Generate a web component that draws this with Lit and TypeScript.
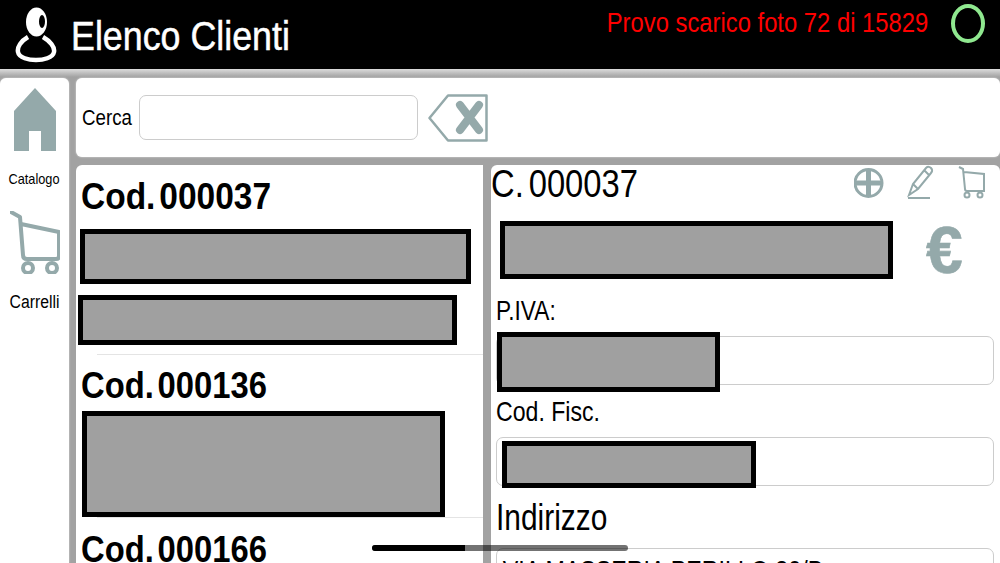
import { LitElement, html, css } from "lit";
import { customElement } from "lit/decorators.js";

const C = "#94a9aa";

@customElement("app-root")
export class AppRoot extends LitElement {
  static styles = css`
    :host { display: block; position: relative; width: 1000px; height: 563px; overflow: hidden; background: #a2a2a2; font-family: "Liberation Sans", Arial, sans-serif; color: #000; }
    .sq { transform-origin: left center; white-space: nowrap; }
    .header { height: 69px; background: #000; display: flex; align-items: flex-start; color: #fff; position: relative; z-index: 1; }
    .user { width: 42px; height: 56px; margin: 7px 0 0 15px; flex: none; }
    .title { font-size: 40px; line-height: 72px; margin-left: 14px; flex: 1; transform: scaleX(.895); -webkit-text-stroke: .5px #fff; }
    .status { color: #f00; font-size: 28px; line-height: 46px; white-space: nowrap; margin-right: 23px; transform: scaleX(.85); transform-origin: right center; }
    .ring { width: 26px; height: 31px; margin: 4px 15px 0 0; border: 4px solid #8fe88f; border-radius: 50%; flex: none; }
    .body { display: flex; height: 494px; background: linear-gradient(#dcdcdc 0, #a2a2a2 8px); }
    .side { width: 69px; margin-top: 9px; background: #fff; border-radius: 6px 6px 0 0; display: flex; flex-direction: column; align-items: center; flex: none; font-size: 15px; box-shadow: 0 0 2px rgba(255,255,255,.7); }
    .home { width: 42px; height: 63px; margin-top: 10px; }
    .cat { margin-top: 19px; line-height: 17px; transform: scaleX(.85); white-space: nowrap; }
    .cart { width: 50px; height: 63px; margin-top: 24px; }
    .car { font-size: 18px; line-height: 20px; margin-top: 18px; transform: scaleX(.875); white-space: nowrap; }
    .main { margin-left: 7px; flex: 1; min-width: 0; margin-top: 9px; display: flex; flex-direction: column; gap: 8px; }
    .search { height: 79px; background: #fff; border-radius: 6px; display: flex; align-items: center; flex: none; box-sizing: border-box; padding-left: 6px; box-shadow: 0 0 2px rgba(255,255,255,.7); }
    .search label { font-size: 22px; width: 57px; flex: none; transform: scaleX(.85); }
    .box { border: 1px solid #ccc; border-radius: 7px; background: #fff; box-sizing: border-box; }
    .search .box { width: 279px; height: 45px; }
    .clear { width: 60px; height: 48px; margin-left: 10px; }
    .panes { display: flex; gap: 8px; flex: 1; min-height: 0; }
    .list { width: 407px; background: #fff; flex: none; overflow: hidden; border-radius: 6px 0 0 0; }
    .code { font-size: 37px; font-weight: 700; line-height: 42px; margin-left: 5px; word-spacing: -6px; transform: scaleX(.905); }
    .code.k { transform: scaleX(.886); }
    .redact { background: #a0a0a0; border: 5px solid #000; box-sizing: border-box; flex: none; }
    .rule { height: 1px; background: #e4e4e4; margin-left: 21px; }
    .detail { flex: 1; background: #fff; border-radius: 6px 6px 0 0; overflow: hidden; padding-left: 5px; }
    .dtop { display: flex; align-items: flex-start; height: 56px; }
    .dcode { font-size: 39px; line-height: 38px; flex: 1; margin-left: -5px; word-spacing: -5px; transform: scaleX(.84); }
    .tool { flex: none; margin-right: 15px; }
    .drow { display: flex; align-items: center; }
    .euro { color: #94a9aa; font-size: 66px; font-weight: 700; line-height: 58px; margin-left: 33px; -webkit-text-stroke: .6px #94a9aa; }
    .lab { font-size: 28px; line-height: 32px; transform: scaleX(.825); }
    .lab.p { transform: scaleX(.81); }
    .field { width: 498px; height: 49px; display: flex; }
    .addr { font-size: 36px; line-height: 40px; transform: scaleX(.83); }
    .val { font-size: 28px; line-height: 30px; padding: 7px 0 0 7px; transform: scaleX(.83); }
    .bar { position: absolute; left: 372px; top: 545px; width: 256px; height: 6px; border-radius: 3px; background: rgba(0,0,0,.55); overflow: hidden; }
    .bar div { width: 93px; height: 6px; background: #000; }
    .mt1 { margin-top: 11px; } .mt2 { margin-top: 10px; } .mt3 { margin-top: 9px; } .mt4 { margin-top: 16px; } .mt5 { margin-top: 12px; }
    .r1 { width: 391px; height: 55px; margin: 11px 0 0 4px; }
    .r2 { width: 379px; height: 50px; margin: 11px 0 0 2px; }
    .r3 { width: 363px; height: 106px; margin: 4px 0 0 6px; }
    .r4 { width: 393px; height: 58px; margin-left: 4px; }
    .r5 { width: 223px; height: 60px; margin-top: -5px; }
    .r6 { width: 254px; height: 47px; margin: 3px 0 0 5px; }
  `;

  render() {
    return html`
      <div class="header">
        <svg class="user" viewBox="0 0 42 56" fill="none"><ellipse cx="21.5" cy="15" rx="10.5" ry="14.5" fill="#fff"/><ellipse cx="27" cy="14.5" rx="3" ry="6.5" fill="#000"/><path d="M13 30C6 34 2 40 3 45 4 51 14 53 21 53 28 53 38 51 39 45 40 40 35 34 28 30" stroke="#fff" stroke-width="4.5"/></svg>
        <div class="title sq">Elenco Clienti</div>
        <div class="status">Provo scarico foto 72 di 15829</div>
        <div class="ring"></div>
      </div>
      <div class="body">
        <div class="side">
          <svg class="home" viewBox="0 0 42 63"><path d="M21 0 42 23V63H27V43H15V63H0V23z" fill="${C}"/></svg>
          <div class="cat">Catalogo</div>
          <svg class="cart" viewBox="0 0 50 63" fill="none" stroke="${C}" stroke-width="4" stroke-linecap="round" stroke-linejoin="round"><path d="M1 1 10 6l3 38c0 3 2 4 4 4h29c2 0 3-1 3-3V21L11 13"/><circle cx="18" cy="57" r="5"/><circle cx="42" cy="57" r="5"/></svg>
          <div class="car">Carrelli</div>
        </div>
        <div class="main">
          <div class="search">
            <label class="sq">Cerca</label>
            <div class="box"></div>
            <svg class="clear" viewBox="0 0 60 48"><path d="M1.5 24 20 1.5H58.5V46.5H20z" fill="none" stroke="${C}" stroke-width="2.5" stroke-linejoin="round"/><path d="M32 11 51 36M51 11 32 36" stroke="${C}" stroke-width="8" stroke-linecap="round"/></svg>
          </div>
          <div class="panes">
            <div class="list">
              <div class="code sq mt1">Cod. 000037</div>
              <div class="redact r1"></div>
              <div class="redact r2"></div>
              <div class="rule mt3"></div>
              <div class="code k sq mt2">Cod. 000136</div>
              <div class="redact r3"></div>
              <div class="rule"></div>
              <div class="code k sq mt1">Cod. 000166</div>
            </div>
            <div class="detail">
              <div class="dtop">
                <div class="dcode sq">C. 000037</div>
                <svg class="tool" width="131" height="36" viewBox="0 0 131 36" fill="none" stroke="${C}"><circle cx="14.5" cy="18" r="13.5" stroke-width="3"/><path d="M14.5 5v26M1 18h27" stroke-width="5"/><path d="M55 30 59 19 72 3c2-2 4-1 5 0s2 3 0 5L64 24l-9 6zM59 19l5 5M70 5l5 5M54 33h22" stroke-width="2"/><path d="M105 2l4 2 2 20c0 1 1 2 2 2h17V9l-20-2" stroke-width="2"/><circle cx="113" cy="30" r="2.5" stroke-width="2"/><circle cx="126" cy="30" r="2.5" stroke-width="2"/></svg>
              </div>
              <div class="drow">
                <div class="redact r4"></div>
                <div class="euro">€</div>
              </div>
              <div class="lab p sq mt4">P.IVA:</div>
              <div class="box field mt3"><div class="redact r5"></div></div>
              <div class="lab sq mt1">Cod. Fisc.</div>
              <div class="box field mt3"><div class="redact r6"></div></div>
              <div class="addr sq mt5">Indirizzo</div>
              <div class="box field mt2"><div class="val sq">VIA MASSERIA PERILLO 30/B</div></div>
            </div>
          </div>
        </div>
      </div>
      <div class="bar"><div></div></div>
    `;
  }
}
